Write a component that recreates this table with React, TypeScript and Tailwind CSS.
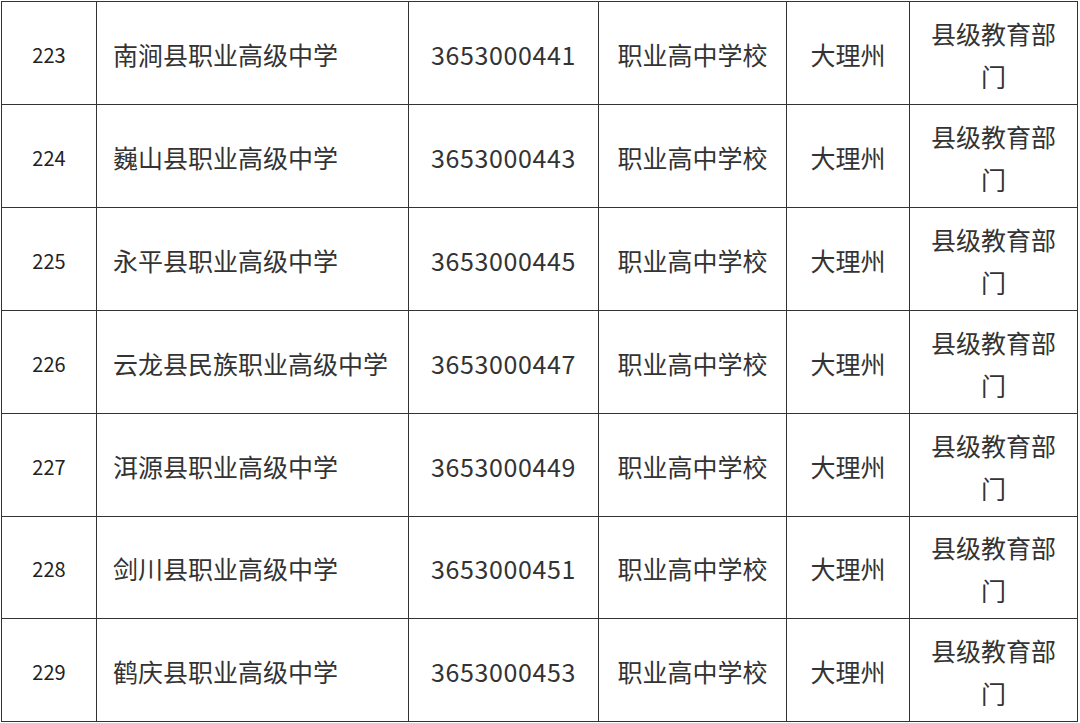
const rows = [
  { no: "223", name: "南涧县职业高级中学", code: "3653000441", h: "h-[103px]" },
  { no: "224", name: "巍山县职业高级中学", code: "3653000443", h: "h-[103px]" },
  { no: "225", name: "永平县职业高级中学", code: "3653000445", h: "h-[103px]" },
  { no: "226", name: "云龙县民族职业高级中学", code: "3653000447", h: "h-[103px]" },
  { no: "227", name: "洱源县职业高级中学", code: "3653000449", h: "h-[103px]" },
  { no: "228", name: "剑川县职业高级中学", code: "3653000451", h: "h-[102px]" },
  { no: "229", name: "鹤庆县职业高级中学", code: "3653000453", h: "h-[103px]" },
];

const cell = "flex items-center pt-[3px] border-r border-b border-[#333]";

export default function App() {
  return (
    <div
      className="min-h-screen bg-white pl-px pt-px text-[#333]"
      style={{ fontFamily: '"Noto Sans CJK SC", "Noto Sans", sans-serif' }}
    >
      <div className="w-[1077px] border-l border-t border-[#333]">
        {rows.map((r) => (
          <div
            key={r.no}
            className={`grid grid-cols-[95px_312px_190px_188px_123px_168px] ${r.h}`}
          >
            <div className={`${cell} justify-center text-[20px] text-[#222]`}>{r.no}</div>
            <div className={`${cell} pl-[16px] text-[25px] whitespace-nowrap`}>{r.name}</div>
            <div className={`${cell} justify-center text-[25px] tracking-[0.6px]`}>{r.code}</div>
            <div className={`${cell} justify-center text-[25px]`}>职业高中学校</div>
            <div className={`${cell} justify-center text-[25px]`}>大理州</div>
            <div className={`${cell} justify-center px-[16px] text-center text-[25px] leading-[43px]`}>
              县级教育部门
            </div>
          </div>
        ))}
      </div>
    </div>
  );
}
